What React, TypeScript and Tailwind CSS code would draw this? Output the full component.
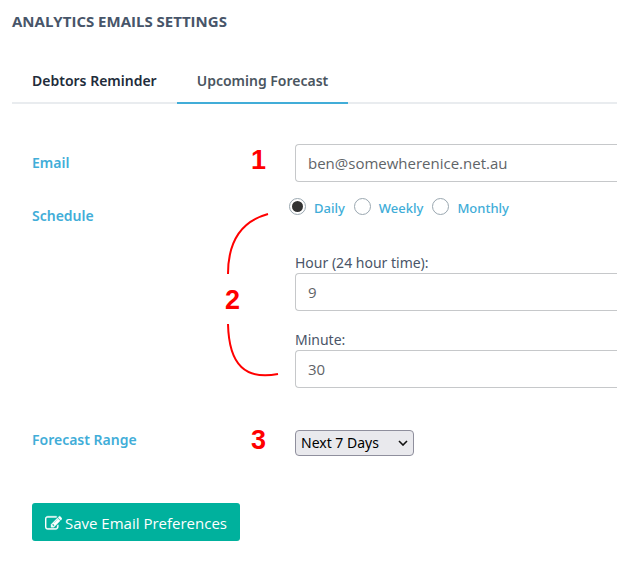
import { useState } from 'react'
import type { ReactNode } from 'react'
import { clsx } from 'clsx'

const tabs = ['Debtors Reminder', 'Upcoming Forecast']
const frequencies = ['Daily', 'Weekly', 'Monthly']

const labelClass = 'w-[219px] shrink-0 text-[14px] leading-5 font-semibold text-[#41add8]'
const inputClass =
  "block h-[38px] w-full rounded-l border border-r-0 border-[#c6c8ca] bg-white px-3 font-['Open_Sans','Noto_Sans',sans-serif] text-[15px] text-[#5f6468] outline-none"
const markerClass = "font-['Liberation_Sans',sans-serif] text-[27px] leading-5 font-bold text-[#ff0000]"

function Marker({ children }: { children?: ReactNode }) {
  return <span className={clsx(markerClass, 'w-11 shrink-0 pb-1.5')}>{children}</span>
}

// Connects the schedule marker with the radios above and the inputs below
function ScheduleBracket() {
  return (
    <div className="pointer-events-none absolute top-3.5 left-[190px] h-[168px] w-[60px]">
      <svg viewBox="0 0 60 168" className="h-full w-full" fill="none" stroke="#ff0000" strokeWidth="2">
        <path d="M46 2C24 8 6 24 6 62" />
        <path d="M6 112C7 154 24 168 56 162" />
      </svg>
      <span className={clsx(markerClass, 'absolute top-[78px] left-[3px]')}>2</span>
    </div>
  )
}

function EditIcon() {
  return (
    <svg
      viewBox="0 0 1792 1792"
      className="size-[17px]"
      fill="currentColor"
      stroke="currentColor"
      strokeWidth="40"
      aria-hidden="true"
    >
      <path d="M888 1184l116-116-152-152-116 116v56h96v96h56zm440-720q-16-16-33 1l-350 350q-17 17-1 33t33-1l350-350q17-17 1-33zm80 594v190q0 119-84.5 203.5t-203.5 84.5h-832q-119 0-203.5-84.5t-84.5-203.5v-832q0-119 84.5-203.5t203.5-84.5h832q63 0 117 25 15 7 18 23 3 17-9 29l-49 49q-14 14-32 8-23-6-45-6h-832q-66 0-113 47t-47 113v832q0 66 47 113t113 47h832q66 0 113-47t47-113v-126q0-13 9-22l64-64q15-15 35-7t20 29zm-96-738l288 288-672 672h-288v-288zm444 132l-92 92-288-288 92-92q28-28 68-28t68 28l152 152q28 28 28 68t-28 68z" />
    </svg>
  )
}

export default function App() {
  const [tab, setTab] = useState('Upcoming Forecast')
  const [frequency, setFrequency] = useState('Daily')

  return (
    <main className="bg-white pt-[11px] pl-3 font-['Noto_Sans','Open_Sans',sans-serif] text-[#4a5568]">
      <h1 className="font-['Open_Sans','Noto_Sans',sans-serif] text-[15px] leading-5 font-bold text-[#475569]">
        ANALYTICS EMAILS SETTINGS
      </h1>

      <div role="tablist" className="mt-[27px] flex border-b-2 border-[#e9ecef]">
        {tabs.map(name => (
          <button
            key={name}
            type="button"
            role="tab"
            aria-selected={tab === name}
            onClick={() => setTab(name)}
            className={clsx(
              '-mb-0.5 h-[46px] border-b-2 px-5 text-[14px] font-semibold whitespace-nowrap',
              tab === name ? 'border-[#41add8] text-[#4a5560]' : 'border-transparent text-[#212b3a]',
            )}
          >
            {name}
          </button>
        ))}
      </div>

      <form className="pt-10 pl-5" onSubmit={e => e.preventDefault()}>
        <div className="flex items-center">
          <label htmlFor="email" className={labelClass}>Email</label>
          <Marker>1</Marker>
          <input id="email" type="email" defaultValue="ben@somewherenice.net.au" className={clsx(inputClass, 'min-w-0 flex-1')} />
        </div>

        <div role="group" aria-labelledby="schedule" className="relative mt-4 flex items-start">
          <span id="schedule" className={clsx(labelClass, 'mt-2')}>Schedule</span>
          <ScheduleBracket />
          <Marker />
          <div className="min-w-0 flex-1">
            <div className="-ml-1.5 flex h-[18px] gap-[9px]">
              {frequencies.map(name => (
                <label key={name} className="flex items-start gap-2 text-[13px] leading-5 font-medium text-[#41add8]">
                  <input
                    type="radio"
                    name="frequency"
                    value={name}
                    checked={frequency === name}
                    onChange={() => setFrequency(name)}
                    className="size-[17px] shrink-0 appearance-none rounded-full border border-[#9aa7b0] bg-white bg-clip-content p-0.5 checked:bg-[#333333]"
                  />
                  {name}
                </label>
              ))}
            </div>

            <label htmlFor="hour" className="mt-9 block text-[14px] leading-[21px]">Hour (24 hour time):</label>
            <input id="hour" type="text" defaultValue="9" className={inputClass} />

            <label htmlFor="minute" className="mt-[18px] block text-[14px] leading-[21px]">Minute:</label>
            <input id="minute" type="text" defaultValue="30" className={inputClass} />
          </div>
        </div>

        <div className="mt-[42px] flex items-start">
          <label htmlFor="range" className={labelClass}>Forecast Range</label>
          <Marker>3</Marker>
          <div className="relative">
            <select
              id="range"
              defaultValue="7"
              className="block h-[26px] w-[119px] appearance-none rounded border border-[#8f8f9d] bg-[#e9e9ed] pl-[5px] text-[14px] leading-5 text-black"
            >
              <option value="7">Next 7 Days</option>
              <option value="14">Next 14 Days</option>
              <option value="30">Next 30 Days</option>
            </select>
            <svg
              viewBox="0 0 10 6"
              className="pointer-events-none absolute top-[10px] right-1.5 h-1.5 w-2.5"
              fill="none"
              stroke="#111111"
              strokeWidth="1.6"
            >
              <path d="M1 1l4 4 4-4" />
            </svg>
          </div>
        </div>

        <button
          type="submit"
          className="mt-[47px] flex h-[38px] items-center gap-[3px] rounded-[3px] bg-[#00b19d] px-[13px] pt-0.5 font-['Open_Sans','Noto_Sans',sans-serif] text-[15px] text-white"
        >
          <EditIcon />
          Save Email Preferences
        </button>
      </form>
    </main>
  )
}
